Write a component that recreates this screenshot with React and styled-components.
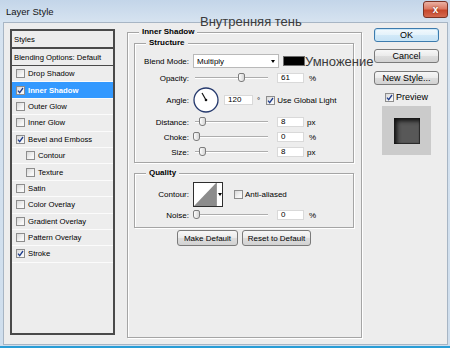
import React from 'react';
import styled, { createGlobalStyle, css } from 'styled-components';

const Global = createGlobalStyle`
  html, body { margin: 0; padding: 0; background: #fff; }
  body { font-family: 'Liberation Sans', Arial, sans-serif; }
`;

const Window = styled.div`
  position: relative;
  width: 450px;
  height: 348px;
  box-sizing: border-box;
  display: flex;
  flex-direction: column;
  padding: 0 2px 1px 3px;
  background: linear-gradient(#c3d5e9, #d6e3f0 22px, #cfdeed);
  border-bottom: 2px solid #2a9dd6;
  font-size: 8px;
  color: #000;
`;

const TitleBar = styled.div`
  height: 22px;
  flex: none;
  display: flex;
  align-items: center;
  justify-content: space-between;
  padding-left: 3px;
`;

const Title = styled.span`
  font-size: 9.5px;
  color: #151515;
`;

const CloseButton = styled.div`
  align-self: flex-start;
  margin-top: 1px;
  width: 25px;
  height: 17px;
  box-sizing: border-box;
  border: 1px solid #7a3325;
  border-radius: 3px;
  background: linear-gradient(#eab1a3, #dc7a63 45%, #c7482c 55%, #d4694f);
  color: #fff;
  font: bold 10px 'Liberation Sans', Arial, sans-serif;
  display: flex;
  align-items: center;
  justify-content: center;
  text-shadow: 0 0 2px #6b1c0c;
`;

const Annotation = styled.span`
  position: absolute;
  left: 200px;
  top: 15px;
  font-size: 13px;
  line-height: 13px;
  color: #3a3a3a;
  white-space: nowrap;
`;

const Body = styled.div`
  flex: 1;
  display: flex;
  align-items: flex-start;
  padding: 6px 0 0 6px;
  background: #ededed;
  border: 1px solid #a7b5c4;
`;

/* ---- left list ---- */
const StylesList = styled.div`
  flex: none;
  width: 105px;
  height: 306px;
  box-sizing: border-box;
  border: 2px solid #4a4a4a;
  display: flex;
  flex-direction: column;
  margin-right: 12px;
  font-size: 7.7px;
`;

const ListHeader = styled.div`
  height: 16px;
  flex: none;
  display: flex;
  align-items: center;
  padding-left: 2px;
  border-bottom: ${p => p.$thick ? 2 : 1}px solid #4a4a4a;
`;

const ListItem = styled.div`
  height: 16.4px;
  flex: none;
  box-sizing: border-box;
  display: flex;
  align-items: center;
  gap: 3px;
  padding-left: ${p => p.$indent ? 14 : 4}px;
  border-bottom: 1px solid #fbfbfb;
  ${p => p.$selected && css`
    background: #3399ff;
    color: #fff;
    font-weight: bold;
  `}
`;

const Box = styled.span`
  flex: none;
  width: 9px;
  height: 9px;
  box-sizing: border-box;
  border: 1px solid #8d8d8d;
  background: linear-gradient(135deg, #d8d8d8, #f7f7f7 70%);
  display: inline-flex;
  align-items: center;
  justify-content: center;
`;

function Checkbox({ checked }) {
  return (
    <Box>
      {checked && (
        <svg width="7" height="7" viewBox="0 0 7 7">
          <path d="M1 3.6 L2.7 5.6 L6 1" fill="none" stroke="#1f3d8c" strokeWidth="1.3" />
        </svg>
      )}
    </Box>
  );
}

const styleItems = [
  { name: 'Drop Shadow' },
  { name: 'Inner Shadow', checked: true, selected: true },
  { name: 'Outer Glow' },
  { name: 'Inner Glow' },
  { name: 'Bevel and Emboss', checked: true },
  { name: 'Contour', indent: true },
  { name: 'Texture', indent: true },
  { name: 'Satin' },
  { name: 'Color Overlay' },
  { name: 'Gradient Overlay' },
  { name: 'Pattern Overlay' },
  { name: 'Stroke', checked: true },
];

/* ---- group boxes ---- */
const GroupBox = styled.fieldset`
  margin: 0;
  min-width: 0;
  border: 1px solid #a5a5a5;
  box-shadow: inset 1px 1px 0 #fff, 1px 1px 0 #fff;
  display: flex;
  flex-direction: column;
`;

const MainGroup = styled(GroupBox)`
  flex: none;
  width: 235px;
  height: 311px;
  box-sizing: border-box;
  margin-top: -2px;
  padding: 0 7px 0 6px;
`;

const SubGroup = styled(GroupBox)`
  margin-top: ${p => p.$mt}px;
  padding: 0 0 ${p => p.$pb}px 0;
`;

const Legend = styled.legend`
  margin-left: ${p => p.$ml}px;
  padding: 0 3px;
  font-weight: bold;
  font-size: 8px;
  line-height: 10px;
  background: #ededed;
`;

const Row = styled.div`
  display: flex;
  align-items: center;
  height: ${p => p.$h}px;
  margin-top: ${p => p.$mt}px;
  white-space: nowrap;
`;

const Label = styled.span`
  flex: none;
  width: 54px;
  margin-right: 4px;
  text-align: right;
`;

const Select = styled.div`
  flex: none;
  width: 86px;
  height: 14px;
  box-sizing: border-box;
  border: 1px solid #b9b9b9;
  background: #fff;
  display: flex;
  align-items: center;
  justify-content: space-between;
  padding: 0 3px 0 3px;
  &::after {
    content: '';
    border-left: 2.5px solid transparent;
    border-right: 2.5px solid transparent;
    border-top: 3px solid #000;
  }
`;

const Swatch = styled.span`
  flex: none;
  width: 22px;
  height: 10px;
  box-sizing: border-box;
  margin-left: 4px;
  background: #000;
  border: 1px solid #6d6d6d;
`;

const Overlay = styled.span`
  font-size: 13px;
  line-height: 13px;
  color: #3a3a3a;
`;

const Track = styled.div`
  position: relative;
  flex: none;
  width: 80px;
  height: 10px;
  &::before {
    content: '';
    position: absolute;
    left: 2px;
    right: 5px;
    top: 4px;
    height: 1px;
    background: #adadad;
    box-shadow: 0 1px 0 #fff;
  }
`;

const Thumb = styled.div`
  position: absolute;
  top: 0;
  width: 7px;
  height: 9px;
  box-sizing: border-box;
  margin-left: -3px;
  border: 1px solid #7c7c7c;
  border-radius: 2px 2px 3px 3px;
  background: linear-gradient(90deg, #fdfdfd, #d5d5d5);
`;

function Slider({ value }) {
  return (
    <Track>
      <Thumb style={{ left: `${3 + value * 0.73}px` }} />
    </Track>
  );
}

const Field = styled.div`
  flex: none;
  width: ${p => p.$w}px;
  height: 10px;
  box-sizing: border-box;
  margin-left: ${p => p.$ml}px;
  border: 1px solid #d9d9d9;
  background: #fff;
  padding-left: 3px;
  line-height: 8px;
`;

const Unit = styled.span`
  margin-left: ${p => p.$ml}px;
`;

const CheckLabel = styled.label`
  display: inline-flex;
  align-items: center;
  gap: 2px;
  margin-left: ${p => p.$ml}px;
`;

function Dial({ angle }) {
  const r = (angle * Math.PI) / 180;
  return (
    <svg width="26" height="26" viewBox="0 0 26 26">
      <circle cx="13" cy="13" r="12" fill="#fff" stroke="#263a6e" strokeWidth="1.3" />
      <line x1="13" y1="13" x2={13 + 8 * Math.cos(r)} y2={13 - 8 * Math.sin(r)} stroke="#111" strokeWidth="1.2" />
      <circle cx="13" cy="13" r="1.3" fill="#111" />
    </svg>
  );
}

const ContourBox = styled.div`
  flex: none;
  width: 30px;
  height: 25px;
  box-sizing: border-box;
  border: 1px solid #2e2e2e;
  background: #fff;
  display: flex;
`;

const ContourArrow = styled.div`
  flex: 1;
  border-left: 1px solid #9a9a9a;
  display: flex;
  align-items: center;
  justify-content: center;
  &::after {
    content: '';
    border-left: 2px solid transparent;
    border-right: 2px solid transparent;
    border-top: 3px solid #000;
  }
`;

const ButtonRow = styled.div`
  display: flex;
  justify-content: center;
  gap: 4px;
  margin-top: 2px;
`;

const Button = styled.div`
  flex: none;
  width: ${p => p.$w}px;
  height: ${p => p.$h}px;
  box-sizing: border-box;
  border: 1px solid #7a7a7a;
  border-radius: 3px;
  background: linear-gradient(#f7f7f7, #ebebeb 48%, #dddddd 52%, #d2d2d2);
  display: flex;
  align-items: center;
  justify-content: center;
  font-size: ${p => p.$fs}px;
  margin-top: ${p => p.$mt || 0}px;
  ${p => p.$default && css`
    border-color: #3d7bad;
    box-shadow: inset 0 0 0 1px #c8e6f8;
    background: linear-gradient(#f3f9fd, #e4f2fb 48%, #d2e9f8 52%, #c6e2f5);
  `}
`;

/* ---- right column ---- */
const Side = styled.div`
  flex: none;
  width: 65px;
  margin-left: 12px;
  margin-top: -1px;
  display: flex;
  flex-direction: column;
  align-items: center;
`;

const PreviewToggle = styled.label`
  display: flex;
  align-items: center;
  gap: 2px;
  height: 10px;
  margin-top: 7px;
  font-size: 9px;
`;

const PreviewBox = styled.div`
  width: 49px;
  height: 49px;
  margin-top: 4px;
  background: #cbcbcb;
  display: flex;
  align-items: center;
  justify-content: center;
`;

const PreviewSquare = styled.div`
  width: 26px;
  height: 26px;
  background: #585858;
  box-shadow: inset 3px 3px 4px #111, inset -1px -1px 1px #2a2a2a;
`;

export default function App() {
  return (
    <Window>
      <Global />
      <TitleBar>
        <Title>Layer Style</Title>
        <CloseButton>x</CloseButton>
      </TitleBar>
      <Annotation>Внутренняя тень</Annotation>
      <Body>
        <StylesList>
          <ListHeader $thick>Styles</ListHeader>
          <ListHeader>Blending Options: Default</ListHeader>
          {styleItems.map(item => (
            <ListItem key={item.name} $indent={item.indent} $selected={item.selected}>
              <Checkbox checked={item.checked} />
              {item.name}
            </ListItem>
          ))}
        </StylesList>

        <MainGroup>
          <Legend $ml={5}>Inner Shadow</Legend>
          <SubGroup $mt={1} $pb={5}>
            <Legend $ml={11}>Structure</Legend>
            <Row $h={14} $mt={6}>
              <Label>Blend Mode:</Label>
              <Select>Multiply</Select>
              <Swatch />
              <Overlay>Умножение</Overlay>
            </Row>
            <Row $h={10} $mt={5}>
              <Label>Opacity:</Label>
              <Slider value={61} />
              <Field $w={27} $ml={4}>61</Field>
              <Unit $ml={5}>%</Unit>
            </Row>
            <Row $h={26} $mt={4}>
              <Label>Angle:</Label>
              <Dial angle={120} />
              <Field $w={29} $ml={5}>120</Field>
              <Unit $ml={4}>°</Unit>
              <CheckLabel $ml={6}>
                <Checkbox checked />
                Use Global Light
              </CheckLabel>
            </Row>
            <Row $h={10} $mt={4}>
              <Label>Distance:</Label>
              <Slider value={8} />
              <Field $w={27} $ml={4}>8</Field>
              <Unit $ml={3}>px</Unit>
            </Row>
            <Row $h={10} $mt={5}>
              <Label>Choke:</Label>
              <Slider value={0} />
              <Field $w={27} $ml={4}>0</Field>
              <Unit $ml={5}>%</Unit>
            </Row>
            <Row $h={10} $mt={5}>
              <Label>Size:</Label>
              <Slider value={8} />
              <Field $w={27} $ml={4}>8</Field>
              <Unit $ml={3}>px</Unit>
            </Row>
          </SubGroup>

          <SubGroup $mt={5} $pb={7}>
            <Legend $ml={11}>Quality</Legend>
            <Row $h={25} $mt={4}>
              <Label>Contour:</Label>
              <ContourBox>
                <svg width="22" height="23" viewBox="0 0 22 23">
                  <polygon points="0,23 22,0 22,23" fill="#8c8c8c" />
                </svg>
                <ContourArrow />
              </ContourBox>
              <CheckLabel $ml={11}>
                <Checkbox />
                Anti-aliased
              </CheckLabel>
            </Row>
            <Row $h={10} $mt={3}>
              <Label>Noise:</Label>
              <Slider value={0} />
              <Field $w={27} $ml={4}>0</Field>
              <Unit $ml={5}>%</Unit>
            </Row>
          </SubGroup>

          <ButtonRow>
            <Button $w={61} $h={16} $fs={8}>Make Default</Button>
            <Button $w={69} $h={16} $fs={8}>Reset to Default</Button>
          </ButtonRow>
        </MainGroup>

        <Side>
          <Button $w={65} $h={14} $fs={9} $default>OK</Button>
          <Button $w={65} $h={14} $fs={9} $mt={7}>Cancel</Button>
          <Button $w={65} $h={14} $fs={9} $mt={8}>New Style...</Button>
          <PreviewToggle>
            <Checkbox checked />
            Preview
          </PreviewToggle>
          <PreviewBox>
            <PreviewSquare />
          </PreviewBox>
        </Side>
      </Body>
    </Window>
  );
}
